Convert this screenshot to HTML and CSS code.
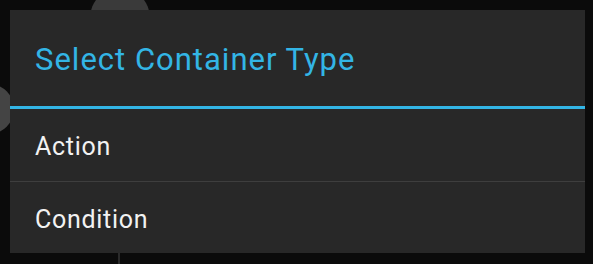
FILE: index.html
```html
<!DOCTYPE html>
<html>
<head>
  <meta charset="UTF-8">
  <title>Select Container Type</title>
  <link rel="stylesheet" href="styles.css">
</head>
<body>
  <div class="backdrop">
    <div class="node node-top"></div>
    <div class="node node-left"></div>
    <div class="wire"></div>
  </div>
  <div class="dialog">
    <div class="dialog-title">Select Container Type</div>
    <div class="dialog-item">Action</div>
    <div class="dialog-item">Condition</div>
  </div>
</body>
</html>
```
FILE: styles.css
```css
* {
    margin: 0;
    padding: 0;
    box-sizing: border-box;
}
body {
    background-color: #0b0b0b;
    font-family: Roboto, "Noto Sans", sans-serif;
    width: 593px;
    height: 264px;
    overflow: hidden;
    padding: 10px 8px 11px 10px;
}
.backdrop .node {
    position: absolute;
    border-radius: 50%;
    background-color: #3a3a3a;
}
.node-top {
    width: 60px;
    height: 60px;
    left: 90px;
    top: -12px;
}
.node-left {
    width: 50px;
    height: 50px;
    left: -36px;
    top: 84px;
    background-color: #444 !important;
}
.wire {
    position: absolute;
    left: 118px;
    top: 250px;
    width: 2px;
    height: 20px;
    background-color: #2a2a2a;
}
.dialog {
    position: relative;
    background-color: #282828;
    height: 243px;
    display: flex;
    flex-direction: column;
}
.dialog-title {
    height: 99px;
    padding: 32px 0 0 25px;
    font-size: 31px;
    line-height: 36px;
    letter-spacing: 1px;
    color: #33b5e5;
    border-bottom: 3px solid #33b5e5;
}
.dialog-item {
    height: 72px;
    padding: 23px 0 0 25px;
    font-size: 25px;
    line-height: 30px;
    letter-spacing: 0.7px;
    color: #f2f2f2;
}
.dialog-item + .dialog-item {
    border-top: 1px solid #3e3e3e;
}
```
